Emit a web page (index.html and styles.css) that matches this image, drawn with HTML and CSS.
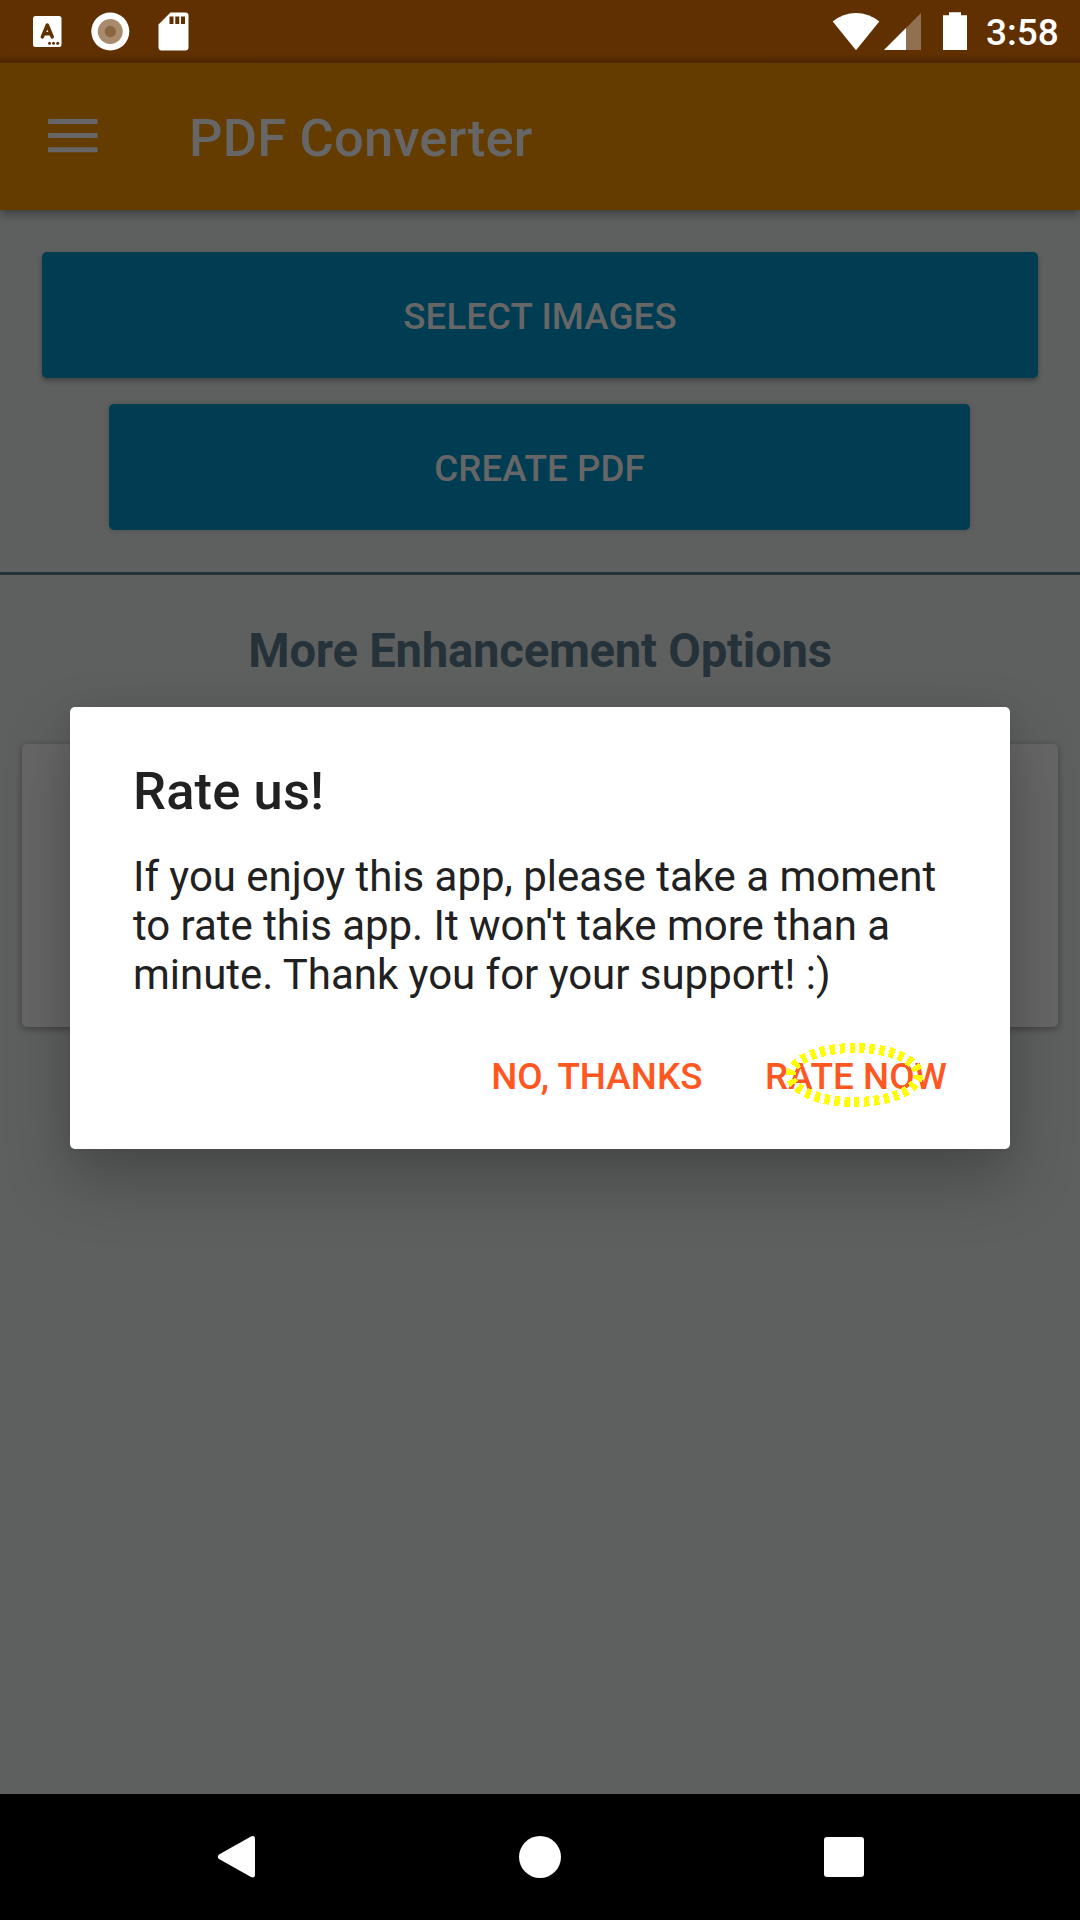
FILE: index.html
```html
<!DOCTYPE html>
<html lang="en">
<head>
<meta charset="utf-8">
<title>PDF Converter</title>
<link rel="stylesheet" href="styles.css">
</head>
<body>
<div class="screen">
  <header class="status-bar">
    <svg class="status-icons" width="220" height="63" viewBox="0 0 220 63">
      <rect x="33" y="16" width="28.5" height="31" rx="2.5" fill="#fff"/>
      <path d="M42.3 37 47.3 25 52.3 37M44 33.7h6.600" fill="none" stroke="#603000" stroke-width="3.400" stroke-linecap="round" stroke-linejoin="round"/>
      <g fill="#603000"><circle cx="49.500" cy="43.200" r="1.500"/><circle cx="53.500" cy="43.200" r="1.500"/><circle cx="57.700" cy="43.200" r="1.500"/></g>
      <circle cx="110.300" cy="31.500" r="19" fill="#fff"/>
      <circle cx="110.300" cy="31.500" r="12.500" fill="#a88b6c"/>
      <circle cx="110.300" cy="31.500" r="5.700" fill="#8a6641"/>
      <path d="M170.500 12.500H185.500a3 3 0 0 1 3 3V47.500a3 3 0 0 1-3 3H161.500a3 3 0 0 1-3-3V24.500Z" fill="#fff"/>
      <path d="M169.500 16.500h4v7.500h-4zM175.300 16.500h4v7.500h-4zM181 16.500h4v7.500h-4z" fill="#603000"/>
    </svg>
    <div class="status-right">
      <svg width="140" height="63" viewBox="0 0 140 63">
        <path d="M2.700 21.500Q13 13 26 13T49.300 21.500L26 50.300Z" fill="#fff"/>
        <path d="M91 13V50H54Z" fill="#907050"/>
        <path d="M76 28V50H54Z" fill="#fff"/>
        <path d="M119 12.300h12v3h6V50h-24V15.300h6Z" fill="#fff"/>
      </svg>
      <span class="clock">3:58</span>
    </div>
  </header>
  <div class="app-bar">
    <svg class="menu" width="50" height="34" viewBox="0 0 50 34"><path d="M0 0h49.500v5H0zM0 14.100h49.500v5H0zM0 28.200h49.500v5H0z" fill="#666"/></svg>
    <h1 class="app-title">PDF Converter</h1>
  </div>
  <main class="content">
    <button class="action action-select">SELECT IMAGES</button>
    <button class="action action-create">CREATE PDF</button>
    <div class="divider"></div>
    <h2 class="section-title">More Enhancement Options</h2>
    <div class="card"></div>
  </main>
  <nav class="nav-bar">
    <svg width="42" height="44" viewBox="0 0 42 44"><path d="M4 19.500 36 1.500Q40 0 40 4V39.500Q40 43.500 36 42L4 24Q1.500 21.800 4 19.500Z" fill="#fff"/></svg>
    <svg width="42" height="44" viewBox="0 0 42 44"><circle cx="21" cy="22" r="21" fill="#fff"/></svg>
    <svg width="42" height="44" viewBox="0 0 42 44"><rect x="1" y="2" width="40" height="40" rx="3" fill="#fff"/></svg>
  </nav>
  <section class="dialog">
    <h2 class="dialog-title">Rate us!</h2>
    <p class="dialog-text">If you enjoy this app, please take a moment<br>to rate this app. It won't take more than a<br>minute. Thank you for your support! :)</p>
    <div class="dialog-actions">
      <button class="text-button">NO, THANKS</button>
      <button class="text-button">RATE NOW</button>
    </div>
    <svg class="highlight" width="144" height="70" viewBox="0 0 144 70"><ellipse cx="72.500" cy="35" rx="64" ry="27" pathLength="300" fill="none" stroke="#ff0" stroke-width="10" stroke-dasharray="5.400 4.600" shape-rendering="crispEdges"/></svg>
  </section>
</div>
</body>
</html>
```
FILE: styles.css
```css
* { box-sizing: border-box; }
body { margin: 0; font-family: Roboto, sans-serif; }
h1, h2, p { margin: 0; }
button { border: 0; padding: 0; font-family: inherit; }
svg { display: block; flex: none; }

.screen {
  position: relative;
  display: flex;
  flex-direction: column;
  width: 1080px;
  height: 1920px;
  overflow: hidden;
  background: #5e605f;
}
.status-bar {
  display: flex;
  justify-content: space-between;
  height: 63px;
  flex: none;
  background: linear-gradient(#603000 54px, #542900);
}
.status-right { display: flex; width: 270px; padding-left: 20px; }
.clock {
  width: 110px;
  padding: 11px 0 0 16px;
  font-size: 37px;
  line-height: 44px;
  font-weight: 500;
  color: #fff;
  white-space: nowrap;
}
.app-bar {
  display: flex;
  align-items: center;
  gap: 91px;
  height: 147px;
  flex: none;
  padding: 0 0 2px 48px;
  background: #643c00;
  box-shadow: 0 4px 10px rgba(0, 0, 0, .36);
}
.app-title {
  padding-top: 4px;
  font-size: 52.500px;
  line-height: 62px;
  font-weight: 500;
  letter-spacing: .2px;
  color: #666;
}
.content {
  display: flex;
  flex-direction: column;
  align-items: center;
  flex: 1;
  padding-top: 42px;
}
.action {
  height: 126px;
  flex: none;
  padding-top: 2px;
  border-radius: 5px;
  background: #003d52;
  color: #666;
  font-size: 36.750px;
  font-weight: 500;
  letter-spacing: .05px;
}
.action-select { width: 996px; box-shadow: 0 3px 5px rgba(0, 0, 0, .3); }
.action-create { width: 861px; margin: 26px 1px 0 0; box-shadow: 0 0 5px rgba(0, 0, 0, .2); }
.divider { align-self: stretch; height: 3px; margin-top: 42px; background: #26323a; }
.section-title {
  height: 56px;
  margin-top: 48px;
  font-size: 47.250px;
  line-height: 56px;
  letter-spacing: -.25px;
  color: #26323a;
}
.card {
  width: 1036px;
  height: 283px;
  margin-top: 65px;
  border-radius: 5px;
  background: #666;
  box-shadow: 0 2px 7px rgba(0, 0, 0, .35);
}
.nav-bar {
  display: flex;
  justify-content: space-between;
  height: 126px;
  flex: none;
  padding: 41px 215px;
  background: #000;
}
.dialog {
  position: absolute;
  top: 707px;
  left: 70px;
  width: 940px;
  height: 442px;
  padding: 53px 63px 0;
  border-radius: 5px;
  background: #fff;
  color: #212121;
  box-shadow: 0 30px 64px rgba(0, 0, 0, .25), 0 0 24px rgba(0, 0, 0, .06);
}
.dialog-title { font-size: 52.500px; line-height: 62px; font-weight: 500; letter-spacing: .12px; }
.dialog-text {
  margin-top: 30px;
  font-size: 42px;
  line-height: 49px;
  letter-spacing: -.03px;
  white-space: nowrap;
}
.dialog-actions {
  display: flex;
  justify-content: flex-end;
  gap: 62.500px;
  margin-top: 56px;
}
.text-button {
  height: 44px;
  background: none;
  color: #ff5722;
  font-size: 36.750px;
  line-height: 44px;
  font-weight: 500;
  letter-spacing: .08px;
}
.highlight { position: absolute; left: 712px; top: 333px; }
```
